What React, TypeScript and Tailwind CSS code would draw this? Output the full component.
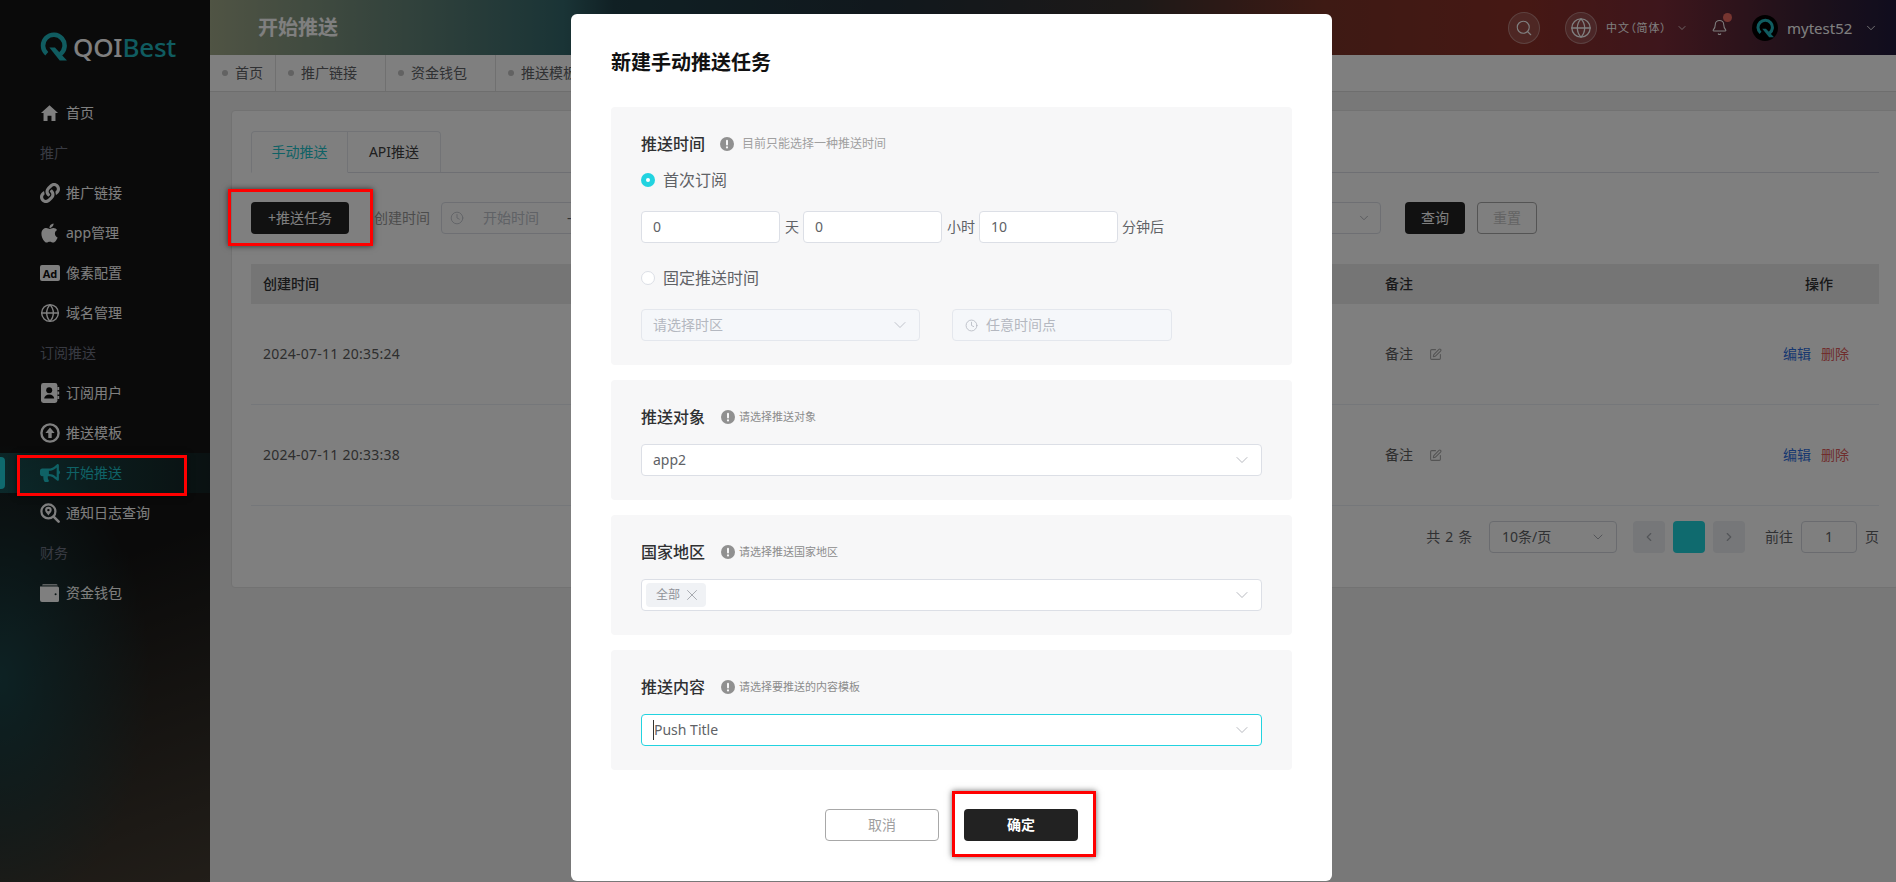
import { Bell, ChevronDown, ChevronLeft, ChevronRight, Clock, Globe, Search, SquarePen, X } from "lucide-react";
import { FaApple, FaBullhorn, FaLink } from "react-icons/fa";
import { IoMdHome } from "react-icons/io";
import type { ReactNode } from "react";

function ContactsIcon() {
  return (
    <svg viewBox="0 0 20 20" className="size-5">
      <rect x="1" y="0" width="16.4" height="20" rx="2.4" fill="currentColor" />
      <path d="M17.4 4h1.8v3h-1.8zM17.4 8.5h1.8v3h-1.8zM17.4 13h1.8v3h-1.8z" fill="currentColor" />
      <circle cx="9.2" cy="7.2" r="3" fill="#0c0c0c" />
      <path d="M4.2 15.6c0-2.6 2.2-4.2 5-4.2s5 1.6 5 4.2z" fill="#0c0c0c" />
    </svg>
  );
}

function UploadIcon() {
  return (
    <svg viewBox="0 0 20 20" className="size-5" fill="none">
      <circle cx="10" cy="10" r="8.6" stroke="currentColor" strokeWidth="2.4" />
      <path d="M10 4.6 14.6 10H11.7v5H8.3v-5H5.4z" fill="currentColor" />
    </svg>
  );
}

function LogSearchIcon() {
  return (
    <svg viewBox="0 0 20 20" className="size-5" fill="none">
      <circle cx="8.4" cy="8.4" r="7" stroke="currentColor" strokeWidth="2.2" />
      <path d="M8.4 3.8a3.3 3.3 0 0 1 3.3 3.3c0 2-2 3.6-3.3 5.4-1.3-1.8-3.3-3.4-3.3-5.4a3.3 3.3 0 0 1 3.3-3.3z" fill="currentColor" />
      <circle cx="8.4" cy="7.1" r="1.2" fill="#0c0c0c" />
      <path d="m13.6 13.6 5 5" stroke="currentColor" strokeWidth="2.6" strokeLinecap="round" />
    </svg>
  );
}

function WalletIcon() {
  return (
    <svg viewBox="0 0 20 20" className="size-5">
      <path d="M3 1h13a1.6 1.6 0 0 1 1.6 1.4H2.2A1.4 1.4 0 0 1 3 1z" fill="currentColor" opacity=".7" />
      <path fillRule="evenodd" d="M1.6 3.4h15.8A1.6 1.6 0 0 1 19 5v12.4a1.6 1.6 0 0 1-1.6 1.6H2A2 2 0 0 1 0 17V3.4zM15.6 10.2a1 1 0 1 0 0 2 1 1 0 0 0 0-2z" fill="currentColor" />
    </svg>
  );
}

function LogoMark({ className }: { className: string }) {
  return (
    <svg viewBox="0 0 26 28" className={className} fill="none">
      <path d="M19.5 21.5A10.4 10.4 0 1 0 6.5 21" stroke="#20b8c0" strokeWidth="4.4" />
      <path d="M9 15h5.4L26 27.5h-7z" fill="#20b8c0" />
    </svg>
  );
}

const menu: { label: string; icon?: ReactNode; group?: boolean; active?: boolean }[] = [
  { label: "首页", icon: <IoMdHome className="size-[22px] -ml-px" /> },
  { label: "推广", group: true },
  { label: "推广链接", icon: <FaLink className="size-5" /> },
  { label: "app管理", icon: <FaApple className="size-[22px] -ml-px" /> },
  {
    label: "像素配置",
    icon: <span className="flex h-[16px] w-5 items-center justify-center rounded-[2px] bg-white text-[11px] font-bold leading-none text-[#111]">Ad</span>,
  },
  { label: "域名管理", icon: <Globe className="size-5" strokeWidth={1.7} /> },
  { label: "订阅推送", group: true },
  { label: "订阅用户", icon: <ContactsIcon /> },
  { label: "推送模板", icon: <UploadIcon /> },
  { label: "开始推送", icon: <FaBullhorn className="size-5" />, active: true },
  { label: "通知日志查询", icon: <LogSearchIcon /> },
  { label: "财务", group: true },
  { label: "资金钱包", icon: <WalletIcon /> },
];

function Sidebar() {
  return (
    <aside className="relative h-full w-[210px] shrink-0 bg-[radial-gradient(ellipse_150px_240px_at_0%_77%,#1a4448_0%,rgba(26,68,72,0)_100%),linear-gradient(160deg,#141414_62%,#443c32_100%)] text-white">
      <div className="flex h-[93px] items-start pl-10 pt-[32px]">
        <LogoMark className="h-[29px] w-[27px]" />
        <span className="ml-[6px] text-[26px] font-medium leading-[30px] tracking-[-0.2px]">
          <span className="text-white">QOI</span>
          <span className="text-[#20b8c0]">Best</span>
        </span>
      </div>
      {menu.map((item) =>
        item.group ? (
          <div key={item.label} className="flex h-10 items-center pl-10 text-sm text-[#707585]">
            {item.label}
          </div>
        ) : (
          <div
            key={item.label}
            className={
              item.active
                ? "relative flex h-10 items-center bg-[linear-gradient(90deg,rgba(30,212,220,0.28),rgba(30,212,220,0.08))] pl-10 text-sm text-[#1ec4cc]"
                : "flex h-10 items-center pl-10 text-sm"
            }
          >
            {item.active && <span className="absolute left-0 top-[4px] h-8 w-[5px] rounded-r bg-[#1ed4dc]" />}
            <span className="flex w-5 items-center justify-center">{item.icon}</span>
            <span className="ml-[6px] leading-5">{item.label}</span>
          </div>
        ),
      )}
    </aside>
  );
}

function TopBar() {
  return (
    <header className="flex h-[55px] shrink-0 items-center bg-[linear-gradient(90deg,#a0a888_0%,#34686c_21%,#204048_24%,#22303a_40%,#3a3230_55%,#7c3428_66%,#8c3028_78%,#7c2c38_86%,#3a2236_95%,#201a3c_100%)] pl-12 text-white">
      <h1 className="text-xl font-bold leading-7">开始推送</h1>
      <div className="ml-auto flex items-center pr-[18px]">
        <span className="flex size-8 items-center justify-center rounded-full border border-white/30 bg-white/15">
          <Search className="size-[18px]" strokeWidth={1.5} />
        </span>
        <span className="ml-[25px] flex size-8 items-center justify-center rounded-full border border-white/30 bg-white/15">
          <Globe className="size-[22px]" strokeWidth={1.4} />
        </span>
        <span className="ml-[9px] w-[60px] whitespace-nowrap text-[11px] leading-4 tracking-[1px] [font-feature-settings:'palt']">中文（简体）</span>
        <ChevronDown className="ml-[10px] size-3" strokeWidth={1.5} />
        <span className="relative ml-[23px] flex">
          <Bell className="size-[17px]" strokeWidth={1.5} />
          <span className="absolute -right-[4px] -top-[6px] size-[9px] rounded-full bg-[#ee6a60]" />
        </span>
        <span className="ml-6 flex size-[26px] items-center justify-center rounded-full bg-black">
          <LogoMark className="h-[20px] w-[18px]" />
        </span>
        <span className="ml-[9px] w-[62px] text-[15px] leading-5">mytest52</span>
        <ChevronDown className="ml-[15px] size-[14px]" strokeWidth={1.5} />
      </div>
    </header>
  );
}

function TabStrip() {
  const tabs = [
    { label: "首页", width: "w-[66px]" },
    { label: "推广链接", width: "w-[110px]" },
    { label: "资金钱包", width: "w-[110px]" },
    { label: "推送模板", width: "w-[110px]" },
  ];
  return (
    <div className="flex h-[37px] shrink-0 border-b border-[#dcdcdc] bg-white">
      {tabs.map((t) => (
        <div key={t.label} className={`flex items-center border-r border-[#e0e0e0] pl-3 text-sm text-[#606266] ${t.width}`}>
          <span className="size-[6px] rounded-full bg-[#c4c4c4]" />
          <span className="ml-[7px] leading-5">{t.label}</span>
        </div>
      ))}
    </div>
  );
}

function TablePanel() {
  const rows = ["2024-07-11 20:35:24", "2024-07-11 20:33:38"];
  return (
    <div className="h-[478px] w-[1668px] rounded border border-[#e4e4e4] bg-white pl-[19px] pt-5">
      <div className="w-[1628px]">
        <div className="flex h-[42px] border-b border-[#dcdfe6] text-sm">
          <div className="-mb-px flex h-[42px] w-[97px] items-center justify-center rounded-tl border border-b-white border-[#e4e7ed] bg-white text-[#1ec4cc]">手动推送</div>
          <div className="flex h-[41px] w-[93px] items-center justify-center rounded-tr border border-l-0 border-b-0 border-[#e4e7ed] text-[#404040]">API推送</div>
        </div>

        <div className="mt-[29px] flex h-8 items-center text-sm">
          <button className="h-8 w-[98px] rounded bg-[#222] text-white">+推送任务</button>
          <span className="ml-[25px] w-[56px] text-[#999]">创建时间</span>
          <div className="ml-[11px] flex h-8 w-[300px] items-center rounded border border-[#dcdfe6] pl-2 text-[#c0c4cc]">
            <Clock className="size-[14px]" strokeWidth={1.5} />
            <span className="ml-[19px] w-[56px]">开始时间</span>
            <span className="ml-7 text-[#606266]">-</span>
          </div>
          <div className="ml-auto flex items-center pr-[342px]">
            <div className="flex h-8 w-[200px] items-center justify-end rounded border border-[#dcdfe6] pr-[9px] text-[#a8abb2]">
              <ChevronDown className="size-[14px]" strokeWidth={1.5} />
            </div>
            <button className="ml-6 h-8 w-[60px] rounded bg-[#222] text-white">查询</button>
            <button className="ml-3 h-8 w-[60px] rounded border border-[#a8a8a8] text-[#c8c8c8]">重置</button>
          </div>
        </div>

        <div className="mt-[30px] grid h-10 grid-cols-[1134px_1fr_auto] items-center bg-[#ebebeb] text-sm font-medium text-[#303133]">
          <span className="pl-3">创建时间</span>
          <span>备注</span>
          <span className="pr-[46px]">操作</span>
        </div>
        {rows.map((date) => (
          <div key={date} className="grid h-[101px] grid-cols-[1134px_1fr_auto] items-center border-b border-[#ebeef5] text-sm text-[#5c5c5c]">
            <span className="pl-3 tracking-[0.25px]">{date}</span>
            <span className="flex items-center">
              备注
              <SquarePen className="ml-4 size-[13px] text-[#a8a8a8]" />
            </span>
            <span className="flex gap-[10px] pr-[30px]">
              <span className="text-[#2f6fe0]">编辑</span>
              <span className="text-[#e05a5a]">删除</span>
            </span>
          </div>
        ))}

        <div className="mt-[15px] flex h-8 items-center justify-end gap-2 text-sm text-[#606266]">
          <span className="tracking-[0.7px]">共 2 条</span>
          <div className="ml-2 flex h-8 w-[128px] items-center justify-between rounded border border-[#d4d7de] pl-3 pr-[10px]">
            10条/页
            <ChevronDown className="size-4 text-[#a8abb2]" strokeWidth={1.5} />
          </div>
          <span className="ml-2 flex size-8 items-center justify-center rounded-sm bg-[#eceef2] text-[#a8abb2]">
            <ChevronLeft className="size-[14px]" />
          </span>
          <span className="size-8 rounded-sm bg-[#1ed4dc]" />
          <span className="flex size-8 items-center justify-center rounded-sm bg-[#eceef2] text-[#a8abb2]">
            <ChevronRight className="size-[14px]" />
          </span>
          <span className="ml-3">前往</span>
          <div className="flex h-8 w-14 items-center justify-center rounded border border-[#d4d7de]">1</div>
          <span>页</span>
        </div>
      </div>
    </div>
  );
}

function InfoIcon() {
  return (
    <svg viewBox="0 0 14 14" className="size-[14px] shrink-0">
      <circle cx="7" cy="7" r="7" fill="#909090" />
      <rect x="6" y="2.8" width="2" height="5.6" rx="1" fill="#f7f7f8" />
      <circle cx="7" cy="10.4" r="1.1" fill="#f7f7f8" />
    </svg>
  );
}

function SectionTitle({ title, hint, time }: { title: string; hint: string; time?: boolean }) {
  return (
    <div className="flex h-5 items-center">
      <span className="w-16 text-base font-medium leading-5 text-[#303133]">{title}</span>
      <span className={time ? "ml-[15px] flex items-center gap-2 text-xs text-[#a0a0a0]" : "ml-4 flex items-center gap-1 text-[11px] text-[#8c8c8c]"}>
        <InfoIcon />
        {hint}
      </span>
    </div>
  );
}

function NumberBox({ value }: { value: string }) {
  return <div className="flex h-8 w-[139px] items-center rounded border border-[#dcdfe6] bg-white pl-[11px] text-sm text-[#606266]">{value}</div>;
}

function SelectBox({ children, focused }: { children: ReactNode; focused?: boolean }) {
  return (
    <div
      className={
        focused
          ? "mt-[17px] flex h-8 w-[621px] items-center justify-between rounded border border-[#22d3e0] bg-white pl-[11px] pr-[9px] text-sm text-[#606266]"
          : "mt-[17px] flex h-8 w-[621px] items-center justify-between rounded border border-[#dcdfe6] bg-white pl-[11px] pr-[9px] text-sm text-[#606266]"
      }
    >
      {children}
      <ChevronDown className="size-5 text-[#a8abb2]" strokeWidth={1} />
    </div>
  );
}

function Section({ children, className }: { children: ReactNode; className?: string }) {
  return <section className={`rounded bg-[#f7f7f8] px-[30px] pb-6 pt-[27px] ${className ?? ""}`}>{children}</section>;
}

function PushDialog() {
  return (
    <div className="absolute left-[571px] top-[14px] h-[867px] w-[761px] rounded-md bg-white pl-10 pr-10 pt-[35px]">
      <h2 className="text-xl font-bold leading-7 text-[#111]">新建手动推送任务</h2>

      <Section className="mt-[30px]">
        <SectionTitle title="推送时间" hint="目前只能选择一种推送时间" time />
        <label className="mt-4 flex h-5 items-center text-base text-[#606266]">
          <span className="flex size-[14px] items-center justify-center rounded-full bg-[#22d3e0]">
            <span className="size-1 rounded-full bg-white" />
          </span>
          <span className="ml-2">首次订阅</span>
        </label>
        <div className="mt-[21px] flex items-center text-sm text-[#606266]">
          <NumberBox value="0" />
          <span className="ml-[5px] mr-1">天</span>
          <NumberBox value="0" />
          <span className="ml-[5px] mr-1">小时</span>
          <NumberBox value="10" />
          <span className="ml-1">分钟后</span>
        </div>
        <label className="mt-[25px] flex h-5 items-center text-base text-[#606266]">
          <span className="size-[14px] rounded-full border border-[#dcdfe6] bg-white" />
          <span className="ml-2">固定推送时间</span>
        </label>
        <div className="mt-[21px] flex gap-8 text-sm text-[#b4b8c0]">
          <div className="flex h-8 w-[279px] items-center justify-between rounded border border-[#e4e7ed] bg-[#f5f7fa] pl-[11px] pr-[9px]">
            请选择时区
            <ChevronDown className="size-5" strokeWidth={1} />
          </div>
          <div className="flex h-8 w-[220px] items-center rounded border border-[#e4e7ed] bg-[#f5f7fa] pl-3">
            <Clock className="size-[13px]" strokeWidth={1.5} />
            <span className="ml-2">任意时间点</span>
          </div>
        </div>
      </Section>

      <Section className="mt-[15px]">
        <SectionTitle title="推送对象" hint="请选择推送对象" />
        <SelectBox>app2</SelectBox>
      </Section>

      <Section className="mt-[15px]">
        <SectionTitle title="国家地区" hint="请选择推送国家地区" />
        <SelectBox>
          <span className="-ml-[7px] flex h-6 w-[60px] items-center rounded bg-[#f0f2f5] pl-[10px] text-xs text-[#909399]">
            全部
            <X className="ml-[3px] size-[18px]" strokeWidth={1} />
          </span>
        </SelectBox>
      </Section>

      <Section className="mt-[15px]">
        <SectionTitle title="推送内容" hint="请选择要推送的内容模板" />
        <SelectBox focused>
          <span className="flex items-center">
            <span className="h-5 w-px bg-[#333]" />
            Push Title
          </span>
        </SelectBox>
      </Section>

      <div className="mt-[39px] flex justify-center gap-[25px] text-sm">
        <button className="h-8 w-[114px] rounded border border-[#a8a8a8] bg-white text-[#a0a0a0]">取消</button>
        <button className="h-8 w-[114px] rounded bg-[#222] font-bold text-white">确定</button>
      </div>
    </div>
  );
}

export default function App() {
  return (
    <div className="relative flex h-[882px] w-[1896px] overflow-hidden bg-[#f0f0f0] [font-family:'Noto_Sans','Noto_Sans_CJK_SC',sans-serif]">
      <Sidebar />
      <main className="flex min-w-0 flex-1 flex-col">
        <TopBar />
        <TabStrip />
        <div className="pl-[21px] pt-[18px]">
          <TablePanel />
        </div>
      </main>

      {/* dialog mask */}
      <div className="absolute inset-0 bg-black/50" />
      <PushDialog />

      {/* red annotation boxes drawn on the screenshot */}
      <div className="absolute left-[228px] top-[189px] h-[57px] w-[145px] border-[3px] border-[#f00] shadow-[0_0_6px_rgba(0,0,0,0.6)]" />
      <div className="absolute left-[17px] top-[455px] h-[41px] w-[170px] border-[3px] border-[#f00] shadow-[0_0_6px_rgba(0,0,0,0.6)]" />
      <div className="absolute left-[952px] top-[791px] h-[66px] w-[144px] border-[3px] border-[#f00] shadow-[0_0_6px_rgba(0,0,0,0.6)]" />
    </div>
  );
}
